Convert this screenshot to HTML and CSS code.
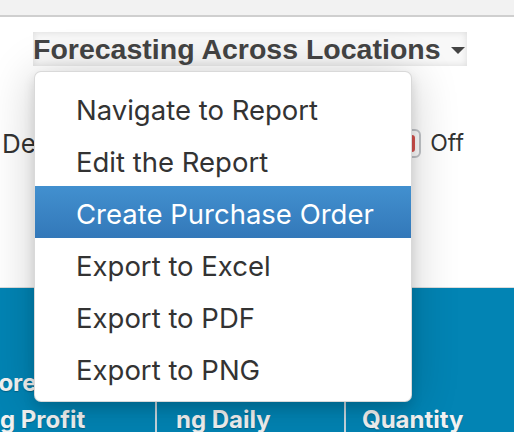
FILE: index.html
```html
<!DOCTYPE html>
<html lang="en">
<head>
<meta charset="utf-8">
<title>Forecasting Across Locations</title>
<link rel="stylesheet" href="styles.css">
</head>
<body>
  <div class="topbar"></div>

  <section class="panel">
    <button class="title-btn" type="button">
      <span class="title-text">Forecasting Across Locations</span>
      <span class="caret"></span>
    </button>

    <div class="controls">
      <label class="control-label">Demand Planning</label>
      <div class="switch-group">
        <span class="switch"><span class="switch-fill"></span></span>
        <span class="switch-text">Off</span>
      </div>
    </div>

    <ul class="menu">
      <li class="menu-item">Navigate to Report</li>
      <li class="menu-item">Edit the Report</li>
      <li class="menu-item active">Create Purchase Order</li>
      <li class="menu-item">Export to Excel</li>
      <li class="menu-item">Export to PDF</li>
      <li class="menu-item">Export to PNG</li>
    </ul>
  </section>

  <div class="grid-head">
    <div class="head-cell first">
      <span class="line">Forecasti</span>
      <span class="line">ng Profit</span>
    </div>
    <div class="head-cell second">
      <span class="line">Forecasti</span>
      <span class="line">ng Daily</span>
    </div>
    <div class="head-cell third">
      <span class="line">&nbsp;</span>
      <span class="line">Quantity</span>
    </div>
  </div>
</body>
</html>
```

FILE: styles.css
```css
html, body {
  margin: 0;
  padding: 0;
  background: #fff;
  overflow: hidden;
}

body {
  width: 514px;
  height: 432px;
  font-family: Inter, "Noto Sans", sans-serif;
  color: #333;
}

/* thin grey strip at the very top */
.topbar {
  height: 15px;
  background: #f2f2f2;
  border-bottom: 2px solid #cfcfcf;
}

.panel {
  position: relative;
  height: 255px;
  padding-top: 15px;
}

/* report title acting as dropdown toggle */
.title-btn {
  display: flex;
  align-items: center;
  justify-content: space-between;
  width: 434px;
  height: 34px;
  margin: 0 0 0 33px;
  padding: 0 2px 0 0;
  border: 0;
  background: #f8f8f8;
  box-shadow: inset 0 0 7px rgba(0, 0, 0, 0.12);
  font: bold 28.5px/34px "Liberation Sans", Arial, sans-serif;
  color: #444;
  cursor: pointer;
}

.caret {
  width: 0;
  height: 0;
  border-left: 7px solid transparent;
  border-right: 7px solid transparent;
  border-top: 7px solid #444;
  margin-top: 2px;
}

.controls {
  display: flex;
  align-items: center;
  height: 29px;
  margin-top: 63px;
  padding: 0 50px 0 2px;
}

.control-label {
  font-size: 26px;
  line-height: 29px;
  color: #333;
  white-space: nowrap;
}

.switch-group {
  display: flex;
  align-items: center;
  gap: 9px;
  margin-left: auto;
}

.switch {
  display: block;
  box-sizing: border-box;
  width: 48px;
  height: 29px;
  padding: 4px;
  border: 2px solid #c3c6ca;
  border-radius: 6px;
  background: #fff;
}

.switch-fill {
  display: block;
  height: 100%;
  border-radius: 3px;
  background: #d9534f;
}

.switch-text {
  font-size: 23px;
  line-height: 29px;
  color: #333;
}

/* open dropdown */
.menu {
  position: absolute;
  left: 34px;
  top: 54px;
  z-index: 10;
  box-sizing: border-box;
  width: 378px;
  margin: 0;
  padding: 10px 0 7px;
  list-style: none;
  background: #fff;
  border: 1px solid rgba(0, 0, 0, 0.15);
  border-radius: 7px;
  box-shadow: 0 6px 12px rgba(0, 0, 0, 0.12), 0 4px 48px rgba(0, 0, 0, 0.2);
}

.menu-item {
  box-sizing: border-box;
  height: 52px;
  padding: 4px 0 0 41px;
  font-size: 27.5px;
  line-height: 48px;
  color: #333;
  white-space: nowrap;
}

.menu-item.active {
  color: #fff;
  background: linear-gradient(#4290cf, #3378b9);
}

/* table header strip */
.grid-head {
  display: grid;
  grid-template-columns: 155px 189px 1fr;
  height: 144px;
  border-top: 1px solid #dcdcdc;
  background: #0284b4;
}

.head-cell {
  padding: 76px 0 0 20px;
  font-weight: 700;
  font-size: 24px;
  line-height: 37px;
  color: #f2f2f2;
  text-shadow: 0 1px 1px rgba(0, 0, 0, 0.25);
  white-space: nowrap;
  overflow: hidden;
}

.head-cell + .head-cell {
  border-left: 2px solid #c7d6de;
}

.head-cell.first {
  padding-left: 0;
  text-indent: -15px;
}

.head-cell.second {
  padding-left: 19px;
}

.head-cell.third {
  padding-left: 16px;
}

.line {
  display: block;
}
```
